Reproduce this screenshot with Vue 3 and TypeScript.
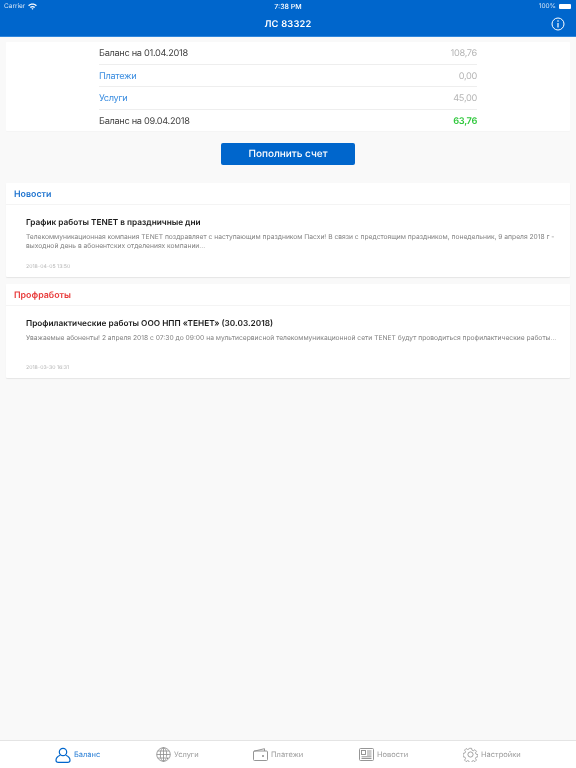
<script setup lang="ts">
type Row = { label: string; value: string; link?: boolean; total?: boolean };
type Post = { title: string; text: string; date: string };

const rows: Row[] = [
  { label: "Баланс на 01.04.2018", value: "108,76" },
  { label: "Платежи", value: "0,00", link: true },
  { label: "Услуги", value: "45,00", link: true },
  { label: "Баланс на 09.04.2018", value: "63,76", total: true },
];

const sections: { name: string; red?: boolean; post: Post }[] = [
  {
    name: "Новости",
    post: {
      title: "График работы TENET в праздничные дни",
      text: "Телекоммуникационная компания TENET поздравляет с наступающим праздником Пасхи! В связи с предстоящим праздником, понедельник, 9 апреля 2018 г - выходной день в абонентских отделениях компании...",
      date: "2018-04-05 13:50",
    },
  },
  {
    name: "Профработы",
    red: true,
    post: {
      title: "Профилактические работы ООО НПП «ТЕНЕТ» (30.03.2018)",
      text: "Уважаемые абоненты! 2 апреля 2018 с 07:30 до 09:00 на мультисервисной телекоммуникационной сети TENET будут проводиться профилактические работы...",
      date: "2018-03-30 16:31",
    },
  },
];
</script>

<template>
  <div class="app">
    <header class="top">
      <div class="status">
        <div class="status-left">
          <span>Carrier</span>
          <svg width="9" height="7" viewBox="0 0 10 8">
            <path d="M0 2.6C2.8-.2 7.2-.2 10 2.6L8.9 3.7C6.7 1.6 3.3 1.6 1.1 3.7Z" fill="#fff" />
            <path d="M2 4.6C3.7 3 6.3 3 8 4.6L6.9 5.7C5.8 4.7 4.2 4.7 3.1 5.7Z" fill="#fff" />
            <path d="M3.9 6.5C4.5 5.9 5.5 5.9 6.1 6.5L5 7.7Z" fill="#fff" />
          </svg>
        </div>
        <span class="clock">7:38 PM</span>
        <div class="status-right">
          <span>100%</span>
          <span class="battery"></span>
        </div>
      </div>
      <div class="nav">
        <span class="nav-title">ЛС 83322</span>
        <svg class="info" width="14" height="14" viewBox="0 0 14 14" fill="none" stroke="#fff">
          <circle cx="7" cy="7" r="6" />
          <path d="M7 6v4.5" stroke-width="1.2" />
          <circle cx="7" cy="4" r=".8" fill="#fff" stroke="none" />
        </svg>
      </div>
    </header>

    <main class="content">
      <section class="card balance">
        <div v-for="row in rows" :key="row.label" class="row">
          <span :class="{ link: row.link }">{{ row.label }}</span>
          <span class="value" :class="{ total: row.total }">{{ row.value }}</span>
        </div>
      </section>

      <button class="pay">Пополнить счет</button>

      <section v-for="s in sections" :key="s.name" class="card news">
        <h2 class="news-head" :class="{ red: s.red }">{{ s.name }}</h2>
        <article class="post">
          <h3>{{ s.post.title }}</h3>
          <p>{{ s.post.text }}</p>
          <time>{{ s.post.date }}</time>
        </article>
      </section>
    </main>

    <nav class="tabs">
      <div class="tab active">
        <svg width="16" height="16" viewBox="0 0 16 16" fill="none" stroke="#0066cc" stroke-width="1.2">
          <circle cx="8" cy="5" r="3.7" />
          <path d="M5.3 8.2C2.8 9.2 1 11 1 13.2 1 14.6 2 15.3 3.4 15.3H12.6C14 15.3 15 14.6 15 13.2 15 11 13.2 9.2 10.7 8.2" />
        </svg>
        <span>Баланс</span>
      </div>
      <div class="tab">
        <svg width="15" height="15" viewBox="0 0 15 15" fill="none" stroke="#8a8a8a" stroke-width=".8">
          <circle cx="7.5" cy="7.5" r="6.8" />
          <ellipse cx="7.5" cy="7.5" rx="3.2" ry="6.8" />
          <path d="M7.5.7v13.6M.7 7.5h13.6M1.8 4h11.4M1.8 11h11.4" />
          <path d="M9.5 9.5 14 11.5 12 12 11.5 14Z" fill="#8a8a8a" stroke="#fff" stroke-width=".5" />
        </svg>
        <span>Услуги</span>
      </div>
      <div class="tab">
        <svg width="15" height="13" viewBox="0 0 15 13" fill="none" stroke="#8a8a8a" stroke-width=".9">
          <path d="M1 3.2 11.5.7V3" />
          <rect x=".5" y="3" width="14" height="9.5" rx="1" />
          <circle cx="10" cy="8" r="1" fill="#8a8a8a" stroke="none" />
        </svg>
        <span>Платежи</span>
      </div>
      <div class="tab">
        <svg width="15" height="13" viewBox="0 0 15 13" fill="none" stroke="#8a8a8a" stroke-width=".9">
          <rect x=".5" y=".5" width="14" height="12" rx="1" />
          <rect x="2.5" y="2.5" width="4" height="4" />
          <path d="M8 3h4.5M8 5h4.5M8 7h4.5M2.5 8.8h10M2.5 10.5h10" />
        </svg>
        <span>Новости</span>
      </div>
      <div class="tab">
        <svg width="15" height="15" viewBox="0 0 15 15" fill="none" stroke="#8a8a8a" stroke-width=".8">
          <path d="M6.3.6h2.4l.4 2 1.5.7 1.8-1.1 1.7 1.7-1.1 1.8.7 1.5 2 .4v2.4l-2 .4-.7 1.5 1.1 1.8-1.7 1.7-1.8-1.1-1.5.7-.4 2H6.3l-.4-2-1.5-.7-1.8 1.1-1.7-1.7 1.1-1.8-.7-1.5-2-.4V6.3l2-.4.7-1.5-1.1-1.8 1.7-1.7 1.8 1.1 1.5-.7Z" stroke-linejoin="round" transform="translate(.75 .75) scale(.9)" />
          <circle cx="7.5" cy="7.5" r="2.6" />
        </svg>
        <span>Настройки</span>
      </div>
    </nav>
  </div>
</template>

<style>
html,
body {
  margin: 0;
  background: #f9f9f9;
}
</style>

<style scoped>
.app {
  width: 576px;
  height: 768px;
  display: flex;
  flex-direction: column;
  font-family: Inter, "Noto Sans", sans-serif;
  text-rendering: geometricPrecision;
  background: #f9f9f9;
  color: #444;
  overflow: hidden;
}

.top {
  height: 37px;
  box-sizing: border-box;
  background: #0066cc;
  color: #fff;
  border-bottom: 1px solid #2f86dc;
}

/* grayscale text, the reference has no colour fringes */
.status,
.nav,
.content,
.tab {
  will-change: transform;
}

.status {
  height: 12px;
  padding: 0 4px;
  display: flex;
  justify-content: space-between;
  align-items: center;
  font-size: 6.5px;
}

.status-left,
.status-right {
  display: flex;
  align-items: center;
  gap: 3px;
  color: #d5e5f6;
}

.clock {
  font-size: 7px;
  font-weight: 500;
}

.battery {
  display: block;
  width: 12px;
  height: 5px;
  margin-right: 1px;
  background: #fff;
  border-radius: 1px;
}

.nav {
  height: 24px;
  display: flex;
  align-items: center;
  justify-content: center;
  position: relative;
}

.nav-title {
  font-size: 9.3px;
  font-weight: 600;
  letter-spacing: 0.2px;
}

.info {
  position: absolute;
  right: 11px;
  top: 5px;
}

.content {
  flex: 1;
  padding: 5px 6px 0;
  display: flex;
  flex-direction: column;
}

.card {
  background: #fff;
  border-radius: 1px;
}

.balance {
  height: 89px;
  box-sizing: border-box;
  padding: 0 93px;
  box-shadow: 0 1px 1px rgba(0, 0, 0, 0.02);
}

.row {
  height: 22.5px;
  box-sizing: border-box;
  padding-top: 2px;
  display: flex;
  justify-content: space-between;
  align-items: center;
  font-size: 9.2px;
  letter-spacing: -0.3px;
  border-bottom: 1px solid #eeeeee;
}

.row:last-child {
  border-bottom: 0;
}

.link {
  color: #3b8de0;
}

.value {
  color: #b5b5b5;
}

.value.total {
  color: #2fc83c;
  font-weight: 600;
}

.pay {
  align-self: center;
  width: 134px;
  height: 22px;
  margin: 12px 0 18px;
  border: 0;
  border-radius: 2px;
  background: #0066cc;
  color: #fff;
  font: 500 10px Inter, "Noto Sans", sans-serif;
  text-rendering: geometricPrecision;
}

.news {
  height: 94px;
  margin-bottom: 7px;
  box-shadow: 0 1px 1px rgba(0, 0, 0, 0.08);
}

.news-head {
  height: 22px;
  margin: 0;
  padding-left: 8px;
  box-sizing: border-box;
  font-size: 8.85px;
  font-weight: 600;
  line-height: 23px;
  color: #1f74cf;
  border-bottom: 1px solid #f4f4f4;
}

.news-head.red {
  color: #e83a3a;
}

.post {
  padding: 0 12px 0 20px;
  display: flex;
  flex-direction: column;
}

.post h3 {
  margin: 10px 0 0;
  padding-top: 0.5px;
  font-size: 8.25px;
  font-weight: 600;
  line-height: 12px;
  color: #1c1c1c;
}

.post p {
  margin: 5.5px 0 0;
  height: 24px;
  font-size: 6.7px;
  line-height: 8.5px;
  color: #808080;
}

.post time {
  margin-top: 7px;
  font-size: 5.2px;
  line-height: 7px;
  color: #b5b5b5;
}

.tabs {
  height: 28px;
  box-sizing: border-box;
  display: flex;
  justify-content: space-evenly;
  background: #fff;
  border-top: 1px solid #e4e4e4;
}

.tab {
  display: flex;
  align-items: center;
  gap: 3px;
  font-size: 7.5px;
  color: #9a9a9a;
}

.tab.active {
  color: #2a7fd6;
}
</style>
